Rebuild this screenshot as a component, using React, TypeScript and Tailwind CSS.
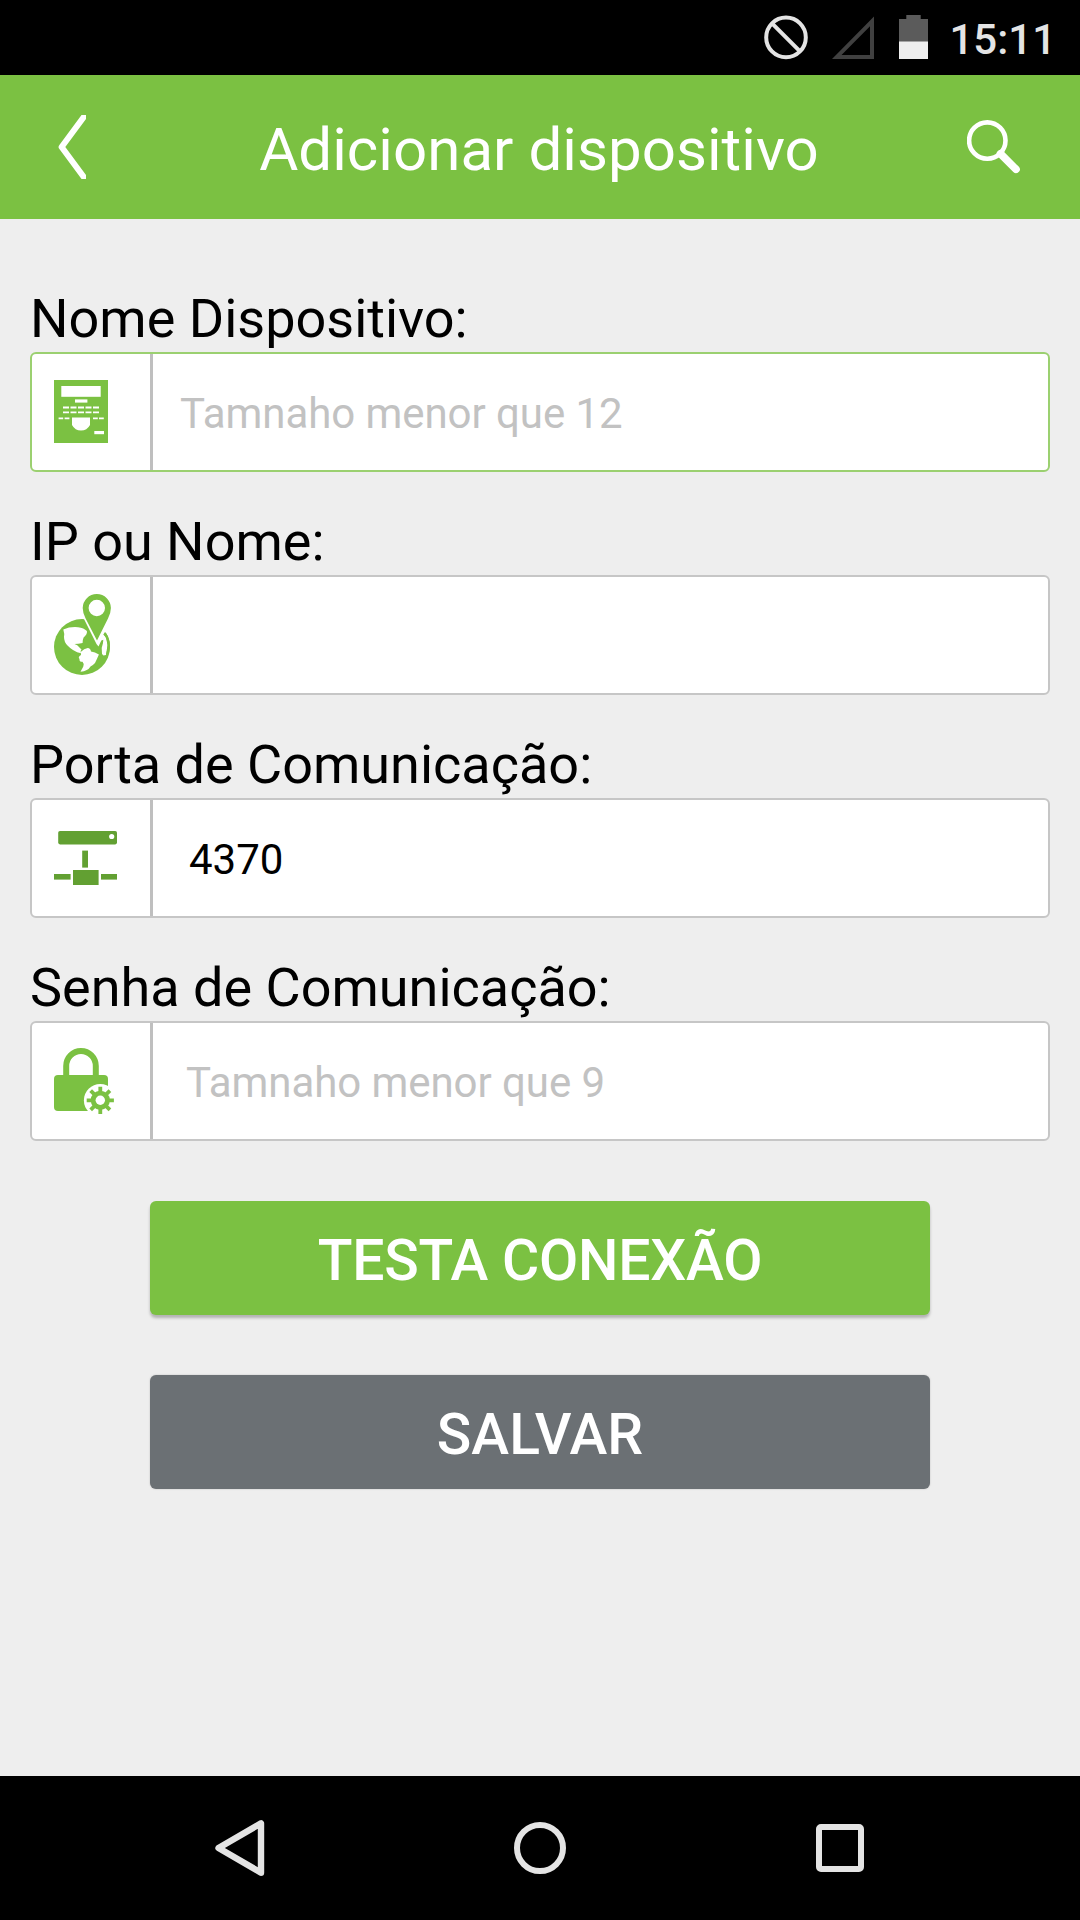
import React from "react";

// ======== Interface Field
interface FieldProps {
  label: string;
  icon: React.ReactNode;
  placeholder?: string;
  value?: string;
  active?: boolean;
  inputClass: string;
}

// ======== Status bar
function StatusBar() {
  return (
    <div className="flex h-[75px] items-center justify-end bg-black pr-[24px]">
      <svg width="170" height="75" viewBox="760 0 170 75">
        <g fill="none" stroke="#e4e4e4" strokeWidth="4">
          <circle cx="786" cy="37.4" r="19.8" />
          <path d="M772 23.4L800 51.4" />
        </g>
        <path
          d="M832 59L874 16.5V59ZM841.5 55H870V26.3Z"
          fill="#404040"
          fillRule="evenodd"
        />
        <path d="M906.3 15H920.7V19H928V42H899V19H906.3Z" fill="#5b5b5b" />
        <rect x="899" y="41.5" width="29" height="17.5" fill="#eeeeee" />
      </svg>
      <span className="ml-[19px] mt-[4px] text-[42px] font-medium leading-none text-[#e4e4e4]">
        15:11
      </span>
    </div>
  );
}

// ======== Header
function Header() {
  return (
    <header className="grid h-[144px] grid-cols-[1fr_auto_1fr] items-center bg-[#7bc142] pl-[58px] pr-[60px] text-white">
      <button className="h-[64px] w-[28px]">
        <svg width="28" height="64" viewBox="0 0 28 64">
          <path
            d="M28 -1L3.6 32L28 65"
            fill="none"
            stroke="currentColor"
            strokeWidth="6"
            strokeLinejoin="round"
          />
        </svg>
      </button>
      <h1 className="mt-[6px] text-[60px] leading-none tracking-[0.05px]">
        Adicionar dispositivo
      </h1>
      <button className="h-[54px] w-[53px] justify-self-end">
        <svg width="53" height="54" viewBox="0 0 53 54">
          <circle
            cx="20.3"
            cy="20.6"
            r="18.2"
            fill="none"
            stroke="currentColor"
            strokeWidth="4.6"
          />
          <path
            d="M33.5 33.8L49 49.3"
            stroke="currentColor"
            strokeWidth="7.6"
            strokeLinecap="round"
          />
        </svg>
      </button>
    </header>
  );
}

// ======== Field icons
function DeviceIcon() {
  const dashes = [9, 16.5, 24, 31.5, 39];
  return (
    <svg className="mb-px" width="54" height="63" viewBox="0 0 54 63">
      <rect width="54" height="63" fill="#7bc142" />
      <g fill="#fff">
        <rect x="7.3" y="6" width="39.4" height="10.8" />
        <rect x="21" y="19.4" width="12.4" height="3.2" />
        {dashes.map((x) => (
          <path key={x} d={`M${x} 26.6h6v1.8h-6zM${x} 31.4h6v1.8h-6z`} />
        ))}
        <path d="M4.6 37.4h4.6v1.8H4.6zM10.6 37.4h4.8v1.8h-4.8zM39 37.4h4.8v1.8H39zM45 37.4h4.8v1.8H45z" />
        <path d="M18 37.4H36V45Q33 50.6 27 50.6T18 45Z" />
        <rect x="40.3" y="51" width="9.7" height="3.2" />
      </g>
    </svg>
  );
}

function GlobeIcon() {
  return (
    <svg className="mb-px" width="57" height="81" viewBox="0 0 57 81">
      <circle cx="28" cy="53" r="28" fill="#7bc142" />
      <g fill="#fff">
        <path d="M9.3 35.5Q16 32.5 24 33.2Q30 34 32.9 37Q33.6 40 29.6 43.5Q28.5 46 28.6 49Q24 50 20.5 50Q24 51.2 24.5 52.5L27.5 55.5Q26 56.5 27 59.3Q19 57.5 13.5 51.5Q10 48 10 43Q10.7 40 9.3 35.5Z" />
        <path d="M27 57.7Q30 54.5 33.7 54Q36.5 54.3 37 57.5Q41 58 44.9 60.5Q43 65 41 69Q39 71 36.5 72.5Q34 77 26.5 77.8Q28 75 29.3 72.5Q30.3 69.5 28.5 67.8Q25 68 25.5 65Q23.5 63 27 61Z" />
        <path d="M30 25L42.5 50L44.5 52.5L47.3 46.5L49.3 45.8L49 49L47.7 54L48 60L49.5 61.5L52 61L53.5 51L52 43.5L49.3 40.5L51 38L57 42V22Z" />
      </g>
      <path
        d="M50.8 39.5Q57.5 49 53 61"
        fill="none"
        stroke="#7bc142"
        strokeWidth="2.4"
      />
      <path
        d="M42.8 0A14.1 14.1 0 0 1 56.9 14.1Q56.9 19 54 24.5L43 46.5L31.6 24.5Q28.7 19 28.7 14.1A14.1 14.1 0 0 1 42.8 0ZM42.8 5.8A8.2 8.2 0 1 0 42.8 22.2A8.2 8.2 0 1 0 42.8 5.8Z"
        fill="#7bc142"
        fillRule="evenodd"
      />
    </svg>
  );
}

function NetworkIcon() {
  return (
    <svg width="63" height="54" viewBox="0 0 63 54">
      <g fill="#62a032">
        <rect x="4.2" width="58.8" height="13.4" rx="1.8" />
        <rect x="28.2" y="19.6" width="5.8" height="17" />
        <rect x="19" y="39" width="25.6" height="15" />
        <rect y="43" width="16.6" height="5.6" />
        <rect x="47" y="43" width="16" height="5.6" />
      </g>
      <circle cx="57.7" cy="5.5" r="2.6" fill="#fff" />
    </svg>
  );
}

function LockIcon() {
  const teeth = [0, 45, 90, 135];
  return (
    <svg width="60" height="66" viewBox="0 0 60 66">
      <rect y="27" width="54" height="36" rx="4" fill="#7bc142" />
      <path
        d="M12.2 29V18A14.8 15 0 0 1 41.8 18V29"
        fill="none"
        stroke="#7bc142"
        strokeWidth="6"
      />
      <circle cx="46.3" cy="52.3" r="16.4" fill="#fff" />
      <g stroke="#7bc142" strokeWidth="3.8">
        {teeth.map((deg) => (
          <path
            key={deg}
            d="M46.3 38.7V65.9"
            transform={`rotate(${deg} 46.3 52.3)`}
          />
        ))}
      </g>
      <circle cx="46.3" cy="52.3" r="9.6" fill="#7bc142" />
      <circle cx="46.3" cy="52.3" r="4.7" fill="#fff" />
    </svg>
  );
}

// ======== Field
function Field({
  label,
  icon,
  placeholder,
  value,
  active,
  inputClass,
}: FieldProps) {
  return (
    <label className="block">
      <span className="block text-[54px] leading-[67px] text-black">
        {label}
      </span>
      <span
        className={`flex h-[120px] overflow-hidden rounded-[6px] border-2 bg-white ${
          active ? "border-[#9bd070]" : "border-[#c6c6c6]"
        }`}
      >
        <span className="-my-0.5 flex w-[121px] shrink-0 items-center border-r-[3px] border-[#bfbfbf] pl-[22px]">
          {icon}
        </span>
        <input
          className={`min-w-0 flex-1 pt-[3px] text-[42px] text-black outline-none placeholder:tracking-[-0.06px] placeholder:text-[#c2c2c2] ${inputClass}`}
          placeholder={placeholder}
          defaultValue={value}
        />
      </span>
    </label>
  );
}

// ======== Navigation bar
function NavBar() {
  return (
    <nav className="flex h-[144px] items-center justify-center gap-[240px] bg-black">
      <svg width="60" height="60" viewBox="210 1818 60 60">
        <path
          d="M218.5 1848L261 1823.3V1872.7Z"
          fill="none"
          stroke="#e4e4e4"
          strokeWidth="6.4"
          strokeLinejoin="round"
        />
      </svg>
      <svg width="60" height="60" viewBox="0 0 60 60">
        <circle
          cx="30"
          cy="30"
          r="23"
          fill="none"
          stroke="#e4e4e4"
          strokeWidth="6"
        />
      </svg>
      <svg width="60" height="60" viewBox="0 0 60 60">
        <path
          d="M11 6H49A5 5 0 0 1 54 11V49A5 5 0 0 1 49 54H11A5 5 0 0 1 6 49V11A5 5 0 0 1 11 6ZM12 12V48H48V12Z"
          fill="#e4e4e4"
          fillRule="evenodd"
        />
      </svg>
    </nav>
  );
}

export default function App() {
  return (
    <div className="flex h-[1920px] w-[1080px] flex-col overflow-hidden bg-[#eeeeee] font-['Roboto',sans-serif]">
      <StatusBar />
      <Header />

      <main className="flex-1 px-[30px] pt-[66px]">
        <div className="flex flex-col gap-[36px]">
          <Field
            label="Nome Dispositivo:"
            icon={<DeviceIcon />}
            placeholder="Tamnaho menor que 12"
            inputClass="pl-[27px]"
            active
          />
          <Field
            label="IP ou Nome:"
            icon={<GlobeIcon />}
            inputClass="pl-[27px]"
          />
          <Field
            label="Porta de Comunicação:"
            icon={<NetworkIcon />}
            value="4370"
            inputClass="pl-[36px]"
          />
          <Field
            label="Senha de Comunicação:"
            icon={<LockIcon />}
            placeholder="Tamnaho menor que 9"
            inputClass="pl-[33px]"
          />
        </div>

        <div className="mt-[60px] flex flex-col gap-[60px] px-[120px]">
          <button className="h-[114px] rounded-[6px] bg-[#7bc142] pt-[4px] text-[57px] font-medium leading-none tracking-[-0.2px] text-white shadow-[0_3px_3px_rgba(0,0,0,0.25)]">
            TESTA CONEXÃO
          </button>
          <button className="h-[114px] rounded-[6px] bg-[#6b7074] pt-[4px] text-[57px] font-medium leading-none text-white shadow-[0_0_2px_rgba(0,0,0,0.2)]">
            SALVAR
          </button>
        </div>
      </main>

      <NavBar />
    </div>
  );
}
